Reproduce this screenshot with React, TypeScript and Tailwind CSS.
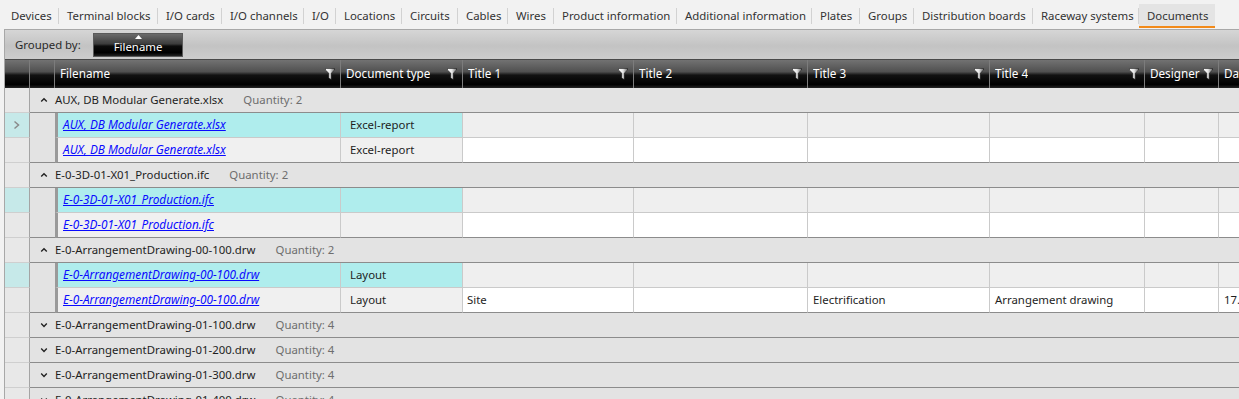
import React from "react";

const tabs: { l: string; w: string }[] = [
  { l: "Devices", w: "w-[55px]" },
  { l: "Terminal blocks", w: "w-[98px]" },
  { l: "I/O cards", w: "w-[63px]" },
  { l: "I/O channels", w: "w-[81px]" },
  { l: "I/O", w: "w-[31px]" },
  { l: "Locations", w: "w-[65px]" },
  { l: "Circuits", w: "w-[55px]" },
  { l: "Cables", w: "w-[49px]" },
  { l: "Wires", w: "w-[45px]" },
  { l: "Product information", w: "w-[122px]" },
  { l: "Additional information", w: "w-[134px]" },
  { l: "Plates", w: "w-[47px]" },
  { l: "Groups", w: "w-[53px]" },
  { l: "Distribution boards", w: "w-[118px]" },
  { l: "Raceway systems", w: "w-[105px]" },
];

type Row = { fn: string; dt?: string; t1?: string; t2?: string; t3?: string; t4?: string; des?: string; date?: string };
type Group = { name: string; q: number; open: boolean; rows: Row[] };

const groups: Group[] = [
  {
    name: "AUX, DB Modular Generate.xlsx",
    q: 2,
    open: true,
    rows: [
      { fn: "AUX, DB Modular Generate.xlsx", dt: "Excel-report" },
      { fn: "AUX, DB Modular Generate.xlsx", dt: "Excel-report" },
    ],
  },
  {
    name: "E-0-3D-01-X01_Production.ifc",
    q: 2,
    open: true,
    rows: [{ fn: "E-0-3D-01-X01_Production.ifc" }, { fn: "E-0-3D-01-X01_Production.ifc" }],
  },
  {
    name: "E-0-ArrangementDrawing-00-100.drw",
    q: 2,
    open: true,
    rows: [
      { fn: "E-0-ArrangementDrawing-00-100.drw", dt: "Layout" },
      {
        fn: "E-0-ArrangementDrawing-00-100.drw",
        dt: "Layout",
        t1: "Site",
        t3: "Electrification",
        t4: "Arrangement drawing",
        date: "17.03.2021",
      },
    ],
  },
  { name: "E-0-ArrangementDrawing-01-100.drw", q: 4, open: false, rows: [] },
  { name: "E-0-ArrangementDrawing-01-200.drw", q: 4, open: false, rows: [] },
  { name: "E-0-ArrangementDrawing-01-300.drw", q: 4, open: false, rows: [] },
  { name: "E-0-ArrangementDrawing-01-400.drw", q: 4, open: false, rows: [] },
];

function Funnel() {
  return (
    <svg width="10" height="12" viewBox="0 0 10 12" className="shrink-0">
      <defs>
        <linearGradient id="fg" x1="0" y1="0" x2="1" y2="0">
          <stop offset="0" stopColor="#ffffff" />
          <stop offset="0.5" stopColor="#e6e6e6" />
          <stop offset="1" stopColor="#6a6a6a" />
        </linearGradient>
      </defs>
      <path d="M0.5 0.5 H9.5 V2 L6.2 5.2 V11.5 L3.8 10.1 V5.2 L0.5 2 Z" fill="url(#fg)" stroke="#111" strokeWidth="0.5" />
    </svg>
  );
}

function Chevron({ open }: { open: boolean }) {
  return (
    <svg width="8" height="6" viewBox="0 0 8 6" className="shrink-0">
      {open ? (
        <polyline points="1.2,4.6 4,1.8 6.8,4.6" fill="none" stroke="#222" strokeWidth="1.4" />
      ) : (
        <polyline points="1.2,1.6 4,4.4 6.8,1.6" fill="none" stroke="#222" strokeWidth="1.4" />
      )}
    </svg>
  );
}

function HeaderCell({ label, w }: { label: string; w: string }) {
  return (
    <div className={`${w} shrink-0 h-full flex items-center justify-between pl-[5px] pr-[5px] border-r border-[#7c7c7c]`}>
      <span className="whitespace-nowrap overflow-hidden">{label}</span>
      <Funnel />
    </div>
  );
}

export default function App() {
  const font = "font-['Noto_Sans',sans-serif]";
  return (
    <div className={`w-[1239px] h-[399px] overflow-hidden bg-[#f2f2f2] text-[11.4px] text-[#1e1e1e] ${font}`}>
      {/* Tab bar */}
      <div className="h-[29px] flex items-stretch pl-[3px] text-[#333]">
        {tabs.map((t) => (
          <React.Fragment key={t.l}>
            <div className={`${t.w} shrink-0 flex items-center pl-[8px] whitespace-nowrap pt-[3px]`}>{t.l}</div>
            <div className="w-px h-[16px] self-center mt-[2px] bg-[#d2d2d2] shrink-0" />
          </React.Fragment>
        ))}
        <div className="w-[76px] shrink-0 mt-[4px] h-[24px] flex items-center pl-[8px] pt-[1px] bg-[#e4e4e4] border-b-2 border-[#f28a1a] whitespace-nowrap">
          Documents
        </div>
      </div>

      {/* Content box */}
      <div className="ml-[4px] border-l border-t border-[#a8a8a8]">
        {/* Grouped by panel */}
        <div className="h-[29px] flex items-center bg-[linear-gradient(to_bottom,#d6d6d6,#c3c3c3_55%,#cdcdcd)]">
          <span className="pl-[10px] w-[88px] text-[#2a2a2a]">Grouped by:</span>
          <div className="relative w-[90px] h-[24px] flex items-center justify-center text-white border border-[#5a5a5a] bg-[linear-gradient(to_bottom,#6a6a6a,#3c3c3c_45%,#0c0c0c_55%,#000_85%,#222)]">
            <svg width="7" height="4" viewBox="0 0 7 4" className="absolute top-[1px] left-[41px]">
              <polygon points="0,4 3.5,0 7,4" fill="#ffffff" />
            </svg>
            <span className="pt-[5px]">Filename</span>
          </div>
        </div>

        {/* Header row */}
        <div className="h-[29px] flex text-white text-[11.7px] border-t border-[#4a4a4a] bg-[linear-gradient(to_bottom,#727272,#505050_42%,#121212_54%,#000_88%,#262626)]">
          <div className="w-[25px] shrink-0 h-full border-r border-[#7c7c7c]" />
          <div className="w-[25px] shrink-0 h-full border-r border-[#7c7c7c]" />
          <HeaderCell label="Filename" w="w-[286px]" />
          <HeaderCell label="Document type" w="w-[122px]" />
          <HeaderCell label="Title 1" w="w-[171px]" />
          <HeaderCell label="Title 2" w="w-[174px]" />
          <HeaderCell label="Title 3" w="w-[182px]" />
          <HeaderCell label="Title 4" w="w-[155px]" />
          <HeaderCell label="Designer" w="w-[74px]" />
          <HeaderCell label="Date" w="w-[100px]" />
        </div>

        {/* Body */}
        <div className="bg-white">
          {groups.map((g, gi) => (
            <React.Fragment key={g.name}>
              <div className="h-[25px] flex">
                <div className="w-[25px] shrink-0 h-full bg-[#e8e8e8] border-r border-b border-r-[#a4a4a4] border-b-[#cfcfcf]" />
                <div className="flex-1 h-full flex items-center bg-[#e3e3e3] border-b border-[#8c8c8c]">
                  <div className="w-[25px] shrink-0 flex justify-start pl-[10px]">
                    <Chevron open={g.open} />
                  </div>
                  <span className="whitespace-nowrap">{g.name}</span>
                  <span className="ml-[20px] text-[#6e6e6e] whitespace-nowrap">Quantity: {g.q}</span>
                </div>
              </div>
              {g.rows.map((r, ri) => {
                const first = ri === 0;
                const last = ri === g.rows.length - 1;
                const key = first ? "bg-[#afeded]" : "bg-[#f0f0f0]";
                const other = first ? "bg-[#efefef]" : "bg-white";
                const bb = last ? "border-b-[#8c8c8c]" : "border-b-[#cacaca]";
                const cell = `shrink-0 h-full flex items-center border-r border-r-[#cacaca] border-b ${bb} whitespace-nowrap overflow-hidden`;
                return (
                  <div key={ri} className="h-[25px] flex">
                    <div
                      className={`w-[25px] shrink-0 h-full flex items-center pl-[8px] border-r border-b border-r-[#a4a4a4] border-b-[#cfcfcf] ${
                        first ? "bg-[#c6e9e9]" : "bg-[#e8e8e8]"
                      }`}
                    >
                      {first && gi === 0 && (
                        <svg width="8" height="10" viewBox="0 0 8 10">
                          <polyline points="1.5,1.5 5.5,5 1.5,8.5" fill="none" stroke="#8a8a8a" strokeWidth="1.5" />
                        </svg>
                      )}
                    </div>
                    <div className={`w-[25px] shrink-0 h-full bg-[#e3e3e3] border-b ${last ? "border-b-[#8c8c8c]" : "border-b-[#e3e3e3]"}`} />
                    <div className={`${cell} w-[286px] ${key} border-l-[3px] border-l-[#9a9a9a] pl-[5px]`}>
                      <span className="italic underline text-[11.8px] text-[#0a0aff]">{r.fn}</span>
                    </div>
                    <div className={`${cell} w-[122px] ${key} pl-[9px]`}>{r.dt ?? ""}</div>
                    <div className={`${cell} w-[171px] ${other} pl-[4px]`}>{r.t1 ?? ""}</div>
                    <div className={`${cell} w-[174px] ${other} pl-[5px]`}>{r.t2 ?? ""}</div>
                    <div className={`${cell} w-[182px] ${other} pl-[5px]`}>{r.t3 ?? ""}</div>
                    <div className={`${cell} w-[155px] ${other} pl-[5px]`}>{r.t4 ?? ""}</div>
                    <div className={`${cell} w-[74px] ${other} pl-[5px]`}>{r.des ?? ""}</div>
                    <div className={`${cell} w-[100px] ${other} pl-[5px]`}>{r.date ?? ""}</div>
                  </div>
                );
              })}
            </React.Fragment>
          ))}
        </div>
      </div>
    </div>
  );
}
